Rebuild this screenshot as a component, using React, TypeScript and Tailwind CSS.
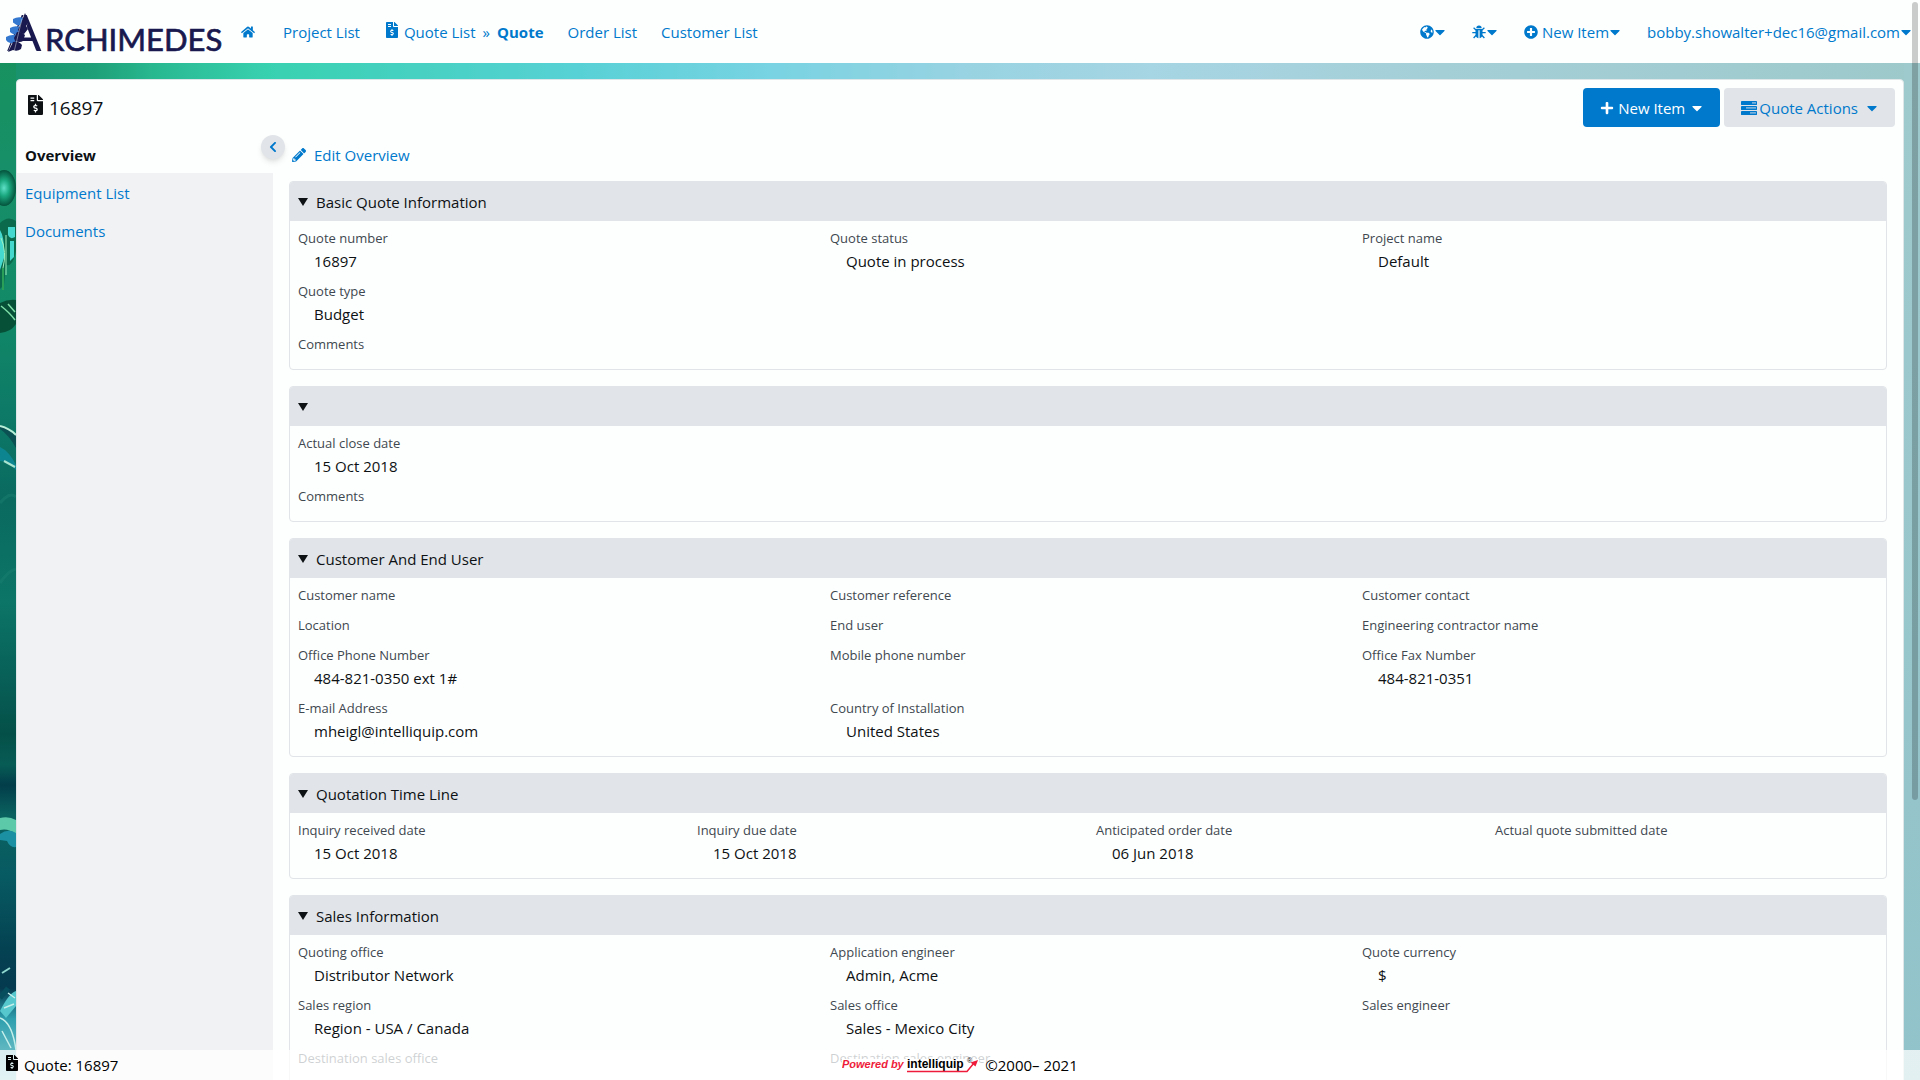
import React from "react";
import {
  FaCaretDown,
  FaChevronLeft,
  FaFileInvoiceDollar,
  FaGlobeAmericas,
  FaHome,
  FaPencilAlt,
  FaPlus,
  FaPlusCircle,
} from "react-icons/fa";

type Field = { label: string; value?: string } | null;
type Section = { title: string; cols: 3 | 4; fields: Field[] };

const sections: Section[] = [
  {
    title: "Basic Quote Information",
    cols: 3,
    fields: [
      { label: "Quote number", value: "16897" },
      { label: "Quote status", value: "Quote in process" },
      { label: "Project name", value: "Default" },
      { label: "Quote type", value: "Budget" },
      null,
      null,
      { label: "Comments" },
    ],
  },
  {
    title: "",
    cols: 3,
    fields: [
      { label: "Actual close date", value: "15 Oct 2018" },
      null,
      null,
      { label: "Comments" },
    ],
  },
  {
    title: "Customer And End User",
    cols: 3,
    fields: [
      { label: "Customer name" },
      { label: "Customer reference" },
      { label: "Customer contact" },
      { label: "Location" },
      { label: "End user" },
      { label: "Engineering contractor name" },
      { label: "Office Phone Number", value: "484-821-0350 ext 1#" },
      { label: "Mobile phone number" },
      { label: "Office Fax Number", value: "484-821-0351" },
      { label: "E-mail Address", value: "mheigl@intelliquip.com" },
      { label: "Country of Installation", value: "United States" },
    ],
  },
  {
    title: "Quotation Time Line",
    cols: 4,
    fields: [
      { label: "Inquiry received date", value: "15 Oct 2018" },
      { label: "Inquiry due date", value: "15 Oct 2018" },
      { label: "Anticipated order date", value: "06 Jun 2018" },
      { label: "Actual quote submitted date" },
    ],
  },
  {
    title: "Sales Information",
    cols: 3,
    fields: [
      { label: "Quoting office", value: "Distributor Network" },
      { label: "Application engineer", value: "Admin, Acme" },
      { label: "Quote currency", value: "$" },
      { label: "Sales region", value: "Region - USA / Canada" },
      { label: "Sales office", value: "Sales - Mexico City" },
      { label: "Sales engineer" },
      { label: "Destination sales office" },
      { label: "Destination sales engineer" },
    ],
  },
];

function BugIcon() {
  return (
    <svg viewBox="0 0 14 14" className="h-3.5 w-3.5" fill="currentColor" aria-hidden="true">
      <path d="M4.300 3.200a2.700 2.700 0 0 1 5.400 0z" />
      <path d="M3.500 4h7v5.200c0 2.200-1.200 3.700-2.900 4V5.200H6.400v8C4.700 12.900 3.500 11.400 3.500 9.200z" />
      <path
        d="M1.600 2.800 4 5M12.400 2.800 10 5M.3 7.700H4M13.700 7.700H10M1.600 13 4.200 10.200M12.400 13 9.800 10.200"
        stroke="currentColor"
        strokeWidth="1.300"
        fill="none"
      />
    </svg>
  );
}

function TasksIcon() {
  return (
    <svg viewBox="0 0 16 14" className="mr-0.5 h-3.5 w-4" aria-hidden="true">
      <g fill="currentColor">
        <rect width="16" height="4" rx=".4" />
        <rect y="5" width="16" height="4" rx=".4" />
        <rect y="10" width="16" height="4" rx=".4" />
      </g>
      <g fill="#a9c9e2">
        <rect x="11" y="1.300" width="4" height="1.200" />
        <rect x="5" y="6.300" width="10" height="1.200" />
        <rect x="9" y="11.300" width="6" height="1.200" />
      </g>
    </svg>
  );
}

function Logo() {
  return (
    <svg viewBox="0 0 222 52" className="h-[52px] w-[222px]" role="img" aria-label="Archimedes">
      <g fill="#19194f" fontFamily="Lato, sans-serif">
        <text x="7" y="45" fontSize="51">A</text>
        <text x="45" y="45" fontSize="31" stroke="#19194f" strokeWidth=".7">RCHIMEDES</text>
      </g>
      <path d="M24 8 17 24 8 46H18L28 16z" fill="#fdfffe" />
      <g fill="#3478d0">
        <path d="M13 13q4-2.500 9-1.500l2 2-4 6q-4 0-7-3z" />
        <path d="M10 22q5-3 10-1l2 3-4 5q-5 0-8-3z" />
        <path d="M6 31q6-3.500 11-1l2 3-4 4q-6 1-9-3z" />
      </g>
      <g fill="#19194f">
        <path d="M25 7 29 16 26 20l2 3-4 5q-5-1-6-4l3-7z" />
        <path d="M17 26q4-1 8 3l-2 6q-3 2-8 0l-1-3z" />
        <path d="M13 36q5-2 9 3l-1 4q-4 3-8 1l-5 2z" />
      </g>
      <path d="M22 13 14 46" stroke="#fdfffe" strokeWidth=".7" opacity=".6" />
    </svg>
  );
}

/* Splashing-water artwork shown along the left edge of the page. */
function WaterEdge() {
  return (
    <svg
      viewBox="0 0 16 1017"
      preserveAspectRatio="none"
      className="absolute inset-y-0 left-0 h-full w-4"
      aria-hidden="true"
    >
      <defs>
        <linearGradient id="deep" x1="0" y1="0" x2="0" y2="1">
          <stop offset="0" stopColor="#17925f" />
          <stop offset=".1" stopColor="#178f68" />
          <stop offset=".24" stopColor="#128a67" />
          <stop offset=".34" stopColor="#0d7a67" />
          <stop offset=".43" stopColor="#0a6a60" />
          <stop offset=".53" stopColor="#0c7567" />
          <stop offset=".6" stopColor="#086159" />
          <stop offset=".66" stopColor="#045048" />
          <stop offset=".69" stopColor="#075c55" />
          <stop offset=".71" stopColor="#023d4a" />
          <stop offset=".74" stopColor="#0a625f" />
          <stop offset=".8" stopColor="#075a62" />
          <stop offset=".87" stopColor="#044252" />
          <stop offset=".91" stopColor="#053a4f" />
          <stop offset=".94" stopColor="#2f9fae" />
          <stop offset="1" stopColor="#8fd0d4" />
        </linearGradient>
        <radialGradient id="drop">
          <stop offset="0" stopColor="#5fe0c8" />
          <stop offset=".45" stopColor="#1aa87f" />
          <stop offset="1" stopColor="#04533c" />
        </radialGradient>
      </defs>
      <rect width="16" height="1017" fill="url(#deep)" />
      <ellipse cx="4" cy="125" rx="12" ry="18" fill="url(#drop)" />
      <path d="M0 160q8-8 16-2v30q-3 16-10 14l-2 20-4 4z" fill="#0b6a4c" />
      <path d="M0 167q5 8 4 28l-4 12zM8 164h7v10q-5 3-7-2zM10 178h4v16l-4 4z" fill="#45d8cf" />
      <path d="M6 172v40M1 175q6 14 2 30" stroke="#9ff0bd" strokeWidth="1" fill="none" />
      <path d="M3 205v22" stroke="#2a9f58" strokeWidth="2" />
      <path d="M0 240q8-4 16-3v24q-5 8-16 9z" fill="#075038" />
      <path d="M1 243q9 7 14 14M8 241l7 8" stroke="#7fe0a8" strokeWidth="1.500" fill="none" />
      <path d="M0 363q9 3 16 10v12Q9 372 0 366z" fill="#0b5052" />
      <path d="M0 363q9 2 16 9" stroke="#b7efd8" strokeWidth="2" fill="none" />
      <path d="M0 384q9 4 16 18v5Q8 398 0 398z" fill="#0d8590" />
      <path d="M4 398l11 6" stroke="#a8e4d0" strokeWidth="2" />
      <path d="M0 440q10-12 16-6M0 520q8-12 16-14" stroke="#1d8572" strokeWidth="3" opacity=".4" fill="none" />
      <path d="M0 755q9-2 16 2v14q-8-6-16-4z" fill="#5cc9a8" />
      <path d="M0 771q8-6 16-1v14q-6 1-9-6l-7-1z" fill="#1b90a2" />
      <path d="M2 910l8-5" stroke="#8fd8cf" strokeWidth="2" />
      <path d="M0 948q9-18 16-20v15L6 955z" fill="#55c7cd" />
      <path d="M0 955q12 4 16 32M8 930l7 5M4 945l10-4M2 968l9 17" stroke="#c5efea" strokeWidth="1.500" fill="none" />
      <path d="M0 935l8-10" stroke="#064e5e" strokeWidth="5" />
    </svg>
  );
}

function SectionCard({ section }: { section: Section }) {
  return (
    <section className="overflow-hidden rounded border border-[#e1e4e8]">
      <h2>
        <button
          type="button"
          aria-expanded="true"
          aria-label={section.title || "Section"}
          className="flex h-[39px] w-full items-center gap-2 bg-[#e1e4e8] pl-2 text-left"
        >
          <svg viewBox="0 0 10 8" className="h-2 w-2.5" aria-hidden="true">
            <path d="M0 0h10L5 8z" fill="currentColor" />
          </svg>
          {section.title}
        </button>
      </h2>
      <dl className={section.cols === 4 ? "grid grid-cols-4 py-1.5" : "grid grid-cols-3 py-1.5"}>
        {section.fields.map((field, i) =>
          field ? (
            <div key={i} className="pb-2 pl-2">
              <dt className="text-[13px] leading-[22px] text-[#3f4850]">{field.label}</dt>
              {field.value && <dd className="pl-4 pt-0.5 leading-[21px]">{field.value}</dd>}
            </div>
          ) : (
            <div key={i} />
          ),
        )}
      </dl>
    </section>
  );
}

export default function App() {
  return (
    <div className="relative flex h-screen flex-col overflow-hidden bg-[#fdfffe] font-['Open_Sans','Noto_Sans',sans-serif] text-[15px] leading-6 text-[#0d1114]">
      <header className="flex h-[63px] shrink-0 items-center pr-2 text-[#0079cc]">
        <a href="#" className="mr-[19px] flex">
          <Logo />
        </a>
        <nav className="flex grow items-center">
          <a href="#" aria-label="Home" className="mr-7">
            <FaHome className="h-4 w-3.5" />
          </a>
          <a href="#" className="mr-[26px]">Project List</a>
          <a href="#" className="flex items-center gap-1.5">
            <FaFileInvoiceDollar className="mb-1 h-4 w-3" />
            Quote List
          </a>
          <span className="px-[7px]">»</span>
          <a href="#" className="mr-6 font-bold">Quote</a>
          <a href="#" className="mr-6">Order List</a>
          <a href="#">Customer List</a>
        </nav>
        <div className="flex items-center gap-[26px]">
          <button type="button" aria-label="Language" className="flex items-center">
            <FaGlobeAmericas className="h-3.5 w-3.5" />
            <FaCaretDown className="h-4 w-3" />
          </button>
          <button type="button" aria-label="Debug" className="flex items-center">
            <BugIcon />
            <FaCaretDown className="h-4 w-3" />
          </button>
          <button type="button" className="flex items-center">
            <FaPlusCircle className="mr-1 h-3.5 w-3.5" />
            New Item
            <FaCaretDown className="h-4 w-3" />
          </button>
          <button type="button" className="flex items-center">
            bobby.showalter+dec16@gmail.com
            <FaCaretDown className="h-4 w-3" />
          </button>
        </div>
      </header>

      <div className="relative min-h-0 grow bg-[linear-gradient(90deg,#17906a_0%,#1fa078_5%,#28b890_8%,#38d1b0_14%,#57d1d5_30%,#78d3e2_40%,#97d3e2_50%,#a6d5e3_60%,#a5cfd7_75%,#9dc9cb_100%)] px-4 pt-4">
        <div className="absolute inset-y-0 right-0 w-4 bg-linear-to-b from-[#9fcacd] to-[#91c3ca]" />
        <WaterEdge />
        <main className="relative rounded-t border border-[#dfe6e8] bg-[#fdfffe]">
          <div className="flex h-[55px] items-start gap-1 pl-[11px] pr-2 pt-2">
            <h1 className="mr-auto flex items-center gap-1.5 pt-1.5 text-[19px] leading-7">
              <FaFileInvoiceDollar className="mb-1.5 h-5 w-[15px]" />
              16897
            </h1>
            <button type="button" className="flex h-[39px] items-center rounded bg-[#0079cc] px-[17px] text-white">
              <FaPlus className="mr-1 h-3.5 w-3.5" />
              New Item
              <FaCaretDown className="ml-1.5 h-4 w-3" />
            </button>
            <button type="button" className="flex h-[39px] items-center rounded bg-[#e1e4e8] px-[17px] text-[#0079cc]">
              <TasksIcon />
              Quote Actions
              <FaCaretDown className="ml-2 h-4 w-3" />
            </button>
          </div>

          <div className="flex">
            <aside className="relative w-64 shrink-0 bg-[#f1f2f4] text-[#0079cc]">
              <nav>
                <a href="#" className="block bg-[#fdfffe] px-2 pb-1.5 pt-2 font-bold text-[#0d1114]">Overview</a>
                <a href="#" className="block px-2 pb-1.5 pt-2">Equipment List</a>
                <a href="#" className="block px-2 pb-1.5 pt-2">Documents</a>
              </nav>
              <button
                type="button"
                aria-label="Collapse sidebar"
                className="absolute -right-3 top-0 flex h-6 w-6 items-center justify-center rounded-full bg-[#e1e4e8] shadow-md"
              >
                <FaChevronLeft className="h-3 w-3" />
              </button>
            </aside>
            <div className="flex grow flex-col gap-4 px-4 pb-16">
              <a href="#" className="-mb-2 flex items-center gap-2 pl-[3px] pb-1.5 pt-2 text-[#0079cc]">
                <FaPencilAlt className="h-3.5 w-3.5" />
                Edit Overview
              </a>
              {sections.map((section, i) => (
                <SectionCard key={i} section={section} />
              ))}
            </div>
          </div>
        </main>
      </div>

      <footer className="absolute inset-x-0 bottom-0 grid h-[30px] grid-cols-3 items-center bg-white/75 text-black">
        <div className="flex items-center gap-1.5 pl-1.5">
          <FaFileInvoiceDollar className="mb-1 h-4 w-3" />
          Quote: 16897
        </div>
        <div className="flex items-center justify-center gap-1.5">
          <svg viewBox="0 0 137 18" className="h-[18px] w-[137px]" role="img" aria-label="Powered by intelliquip">
            <rect y="3" width="137" height="15" fill="#fff" />
            <g fontFamily="'Liberation Sans', sans-serif" fontWeight="bold">
              <text x="0" y="12" fontSize="11" fill="#ee1c3a" fontStyle="italic">Powered by</text>
              <text x="65" y="12" fontSize="12" fill="#000">intelliquip</text>
            </g>
            <text x="125" y="7" fontSize="7" fontFamily="'Liberation Sans', sans-serif">®</text>
            <path d="M65 15.500H125L132 7" stroke="#ee1c3a" strokeWidth="1.500" fill="none" />
            <path d="M136 4 128.500 6.500 133.500 10.500z" fill="#ee1c3a" />
          </svg>
          <span>©2000– 2021</span>
        </div>
      </footer>

      <div className="absolute right-0.5 top-0.5 h-[798px] w-1.5 rounded-full bg-black/20" />
    </div>
  );
}
